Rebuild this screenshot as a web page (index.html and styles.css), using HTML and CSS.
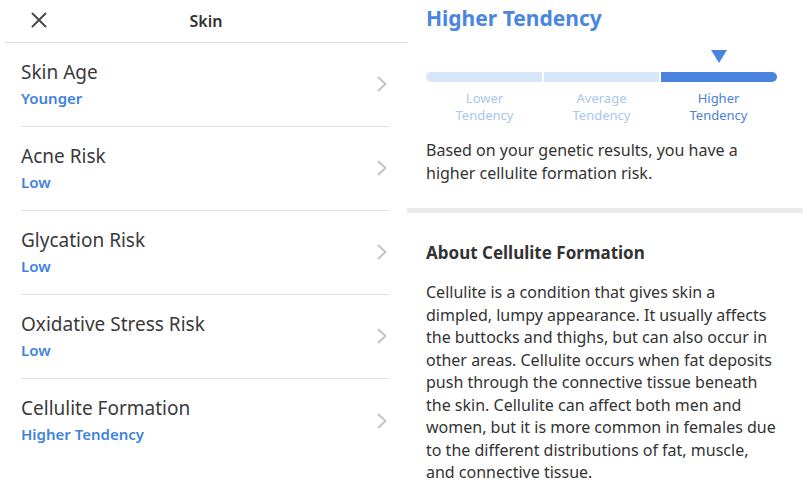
FILE: index.html
```html
<!DOCTYPE html>
<html>
<head>
<meta charset="utf-8">
<link rel="stylesheet" href="styles.css">
</head>
<body>
<div class="screen">
  <section class="left">
    <header class="topbar">
      <svg class="close" width="16" height="16" viewBox="0 0 16 16"><path d="M1.5 1.5 L14.5 14.5 M14.5 1.5 L1.5 14.5" stroke="#4a4a4a" stroke-width="2" stroke-linecap="round" fill="none"/></svg>
      <div class="topbar-title">Skin</div>
    </header>
    <ul class="list">
      <li class="row"><div class="row-text"><div class="row-title">Skin Age</div><div class="row-sub">Younger</div></div><svg class="chev" width="12" height="18" viewBox="0 0 12 18"><path d="M2 2 L9.5 9 L2 16" stroke="#c4c4c4" stroke-width="2" fill="none"/></svg></li>
      <li class="row"><div class="row-text"><div class="row-title">Acne Risk</div><div class="row-sub">Low</div></div><svg class="chev" width="12" height="18" viewBox="0 0 12 18"><path d="M2 2 L9.5 9 L2 16" stroke="#c4c4c4" stroke-width="2" fill="none"/></svg></li>
      <li class="row"><div class="row-text"><div class="row-title">Glycation Risk</div><div class="row-sub">Low</div></div><svg class="chev" width="12" height="18" viewBox="0 0 12 18"><path d="M2 2 L9.5 9 L2 16" stroke="#c4c4c4" stroke-width="2" fill="none"/></svg></li>
      <li class="row"><div class="row-text"><div class="row-title">Oxidative Stress Risk</div><div class="row-sub">Low</div></div><svg class="chev" width="12" height="18" viewBox="0 0 12 18"><path d="M2 2 L9.5 9 L2 16" stroke="#c4c4c4" stroke-width="2" fill="none"/></svg></li>
      <li class="row last"><div class="row-text"><div class="row-title">Cellulite Formation</div><div class="row-sub">Higher Tendency</div></div><svg class="chev" width="12" height="18" viewBox="0 0 12 18"><path d="M2 2 L9.5 9 L2 16" stroke="#c4c4c4" stroke-width="2" fill="none"/></svg></li>
    </ul>
  </section>
  <section class="right">
    <div class="result">
      <h1 class="result-title">Higher Tendency</h1>
      <div class="scale">
        <div class="marker-row">
          <span></span><span></span>
          <span class="marker"><svg width="16" height="13" viewBox="0 0 16 13"><path d="M0 0 H16 L8 13 Z" fill="#4a84de"/></svg></span>
        </div>
        <div class="bar">
          <span class="seg seg-first"></span>
          <span class="seg"></span>
          <span class="seg seg-on seg-last"></span>
        </div>
        <div class="labels">
          <span>Lower<br>Tendency</span>
          <span>Average<br>Tendency</span>
          <span class="on">Higher<br>Tendency</span>
        </div>
      </div>
      <p class="summary">Based on your genetic results, you have a higher cellulite formation risk.</p>
    </div>
    <div class="divider"></div>
    <div class="about">
      <h2 class="about-title">About Cellulite Formation</h2>
      <p class="about-text">Cellulite is a condition that gives skin a dimpled, lumpy appearance. It usually affects the buttocks and thighs, but can also occur in other areas. Cellulite occurs when fat deposits push through the connective tissue beneath the skin. Cellulite can affect both men and women, but it is more common in females due to the different distributions of fat, muscle, and connective tissue.</p>
    </div>
  </section>
</div>
</body>
</html>
```

FILE: styles.css
```css
* { box-sizing: border-box; }
html, body {
  margin: 0;
  padding: 0;
  background: #ffffff;
  font-family: "Noto Sans", "Open Sans", sans-serif;
  color: #333333;
}
.screen {
  display: flex;
  width: 803px;
  height: 487px;
  overflow: hidden;
}
.left {
  width: 407px;
  flex: none;
  padding-left: 5px;
}
.topbar {
  position: relative;
  height: 43px;
  border-bottom: 1px solid #dedede;
  display: flex;
  align-items: center;
  justify-content: center;
}
.close {
  position: absolute;
  left: 26px;
  top: 12px;
}
.topbar-title {
  font-size: 16px;
  font-weight: 600;
  color: #333;
}
.list {
  list-style: none;
  margin: 0;
  padding: 0 17px 0 16px;
}
.row {
  display: flex;
  align-items: center;
  justify-content: space-between;
  height: 84px;
  border-bottom: 1px solid #e3e3e3;
  padding-bottom: 3px;
}
.row.last { border-bottom: none; }
.row-title {
  font-size: 19px;
  line-height: 26px;
  color: #3a3a3a;
}
.row-sub {
  font-size: 15px;
  line-height: 20px;
  font-weight: 600;
  color: #4083dc;
  margin-top: 3px;
}
.chev {
  margin-right: 2px;
  margin-top: 2px;
}
.right {
  flex: 1;
}
.result {
  padding: 0 26px 0 19px;
}
.result-title {
  margin: 0;
  padding-top: 4px;
  font-size: 21px;
  line-height: 28px;
  font-weight: 700;
  color: #4a86df;
}
.scale {
  width: 351px;
  margin-top: 18px;
}
.marker-row {
  display: grid;
  grid-template-columns: 1fr 1fr 1fr;
  height: 14px;
}
.marker {
  display: flex;
  justify-content: center;
}
.marker svg { display: block; margin-left: 1px; }
.bar {
  display: grid;
  grid-template-columns: 1fr 1fr 1fr;
  gap: 2px;
  height: 10px;
  margin-top: 8px;
}
.seg { background: #d7e6f8; }
.seg-first { border-radius: 5px 0 0 5px; }
.seg-last { border-radius: 0 5px 5px 0; }
.seg-on { background: #4a84de; }
.labels {
  display: grid;
  grid-template-columns: 1fr 1fr 1fr;
  margin-top: 8px;
  font-size: 13px;
  line-height: 17px;
  text-align: center;
  color: #a9c6ee;
}
.labels .on { color: #4a80d6; }
.summary {
  margin: 15px 0 0;
  font-size: 16px;
  line-height: 23px;
  color: #333;
}
.divider {
  height: 5px;
  background: #ebebeb;
  margin-top: 23px;
}
.about {
  padding: 0 25px 0 19px;
}
.about-title {
  margin: 0;
  padding-top: 28px;
  font-size: 17px;
  line-height: 24px;
  font-weight: 700;
  color: #333;
}
.about-text {
  margin: 16px 0 0;
  font-size: 16px;
  line-height: 22.5px;
  color: #333;
}
```
